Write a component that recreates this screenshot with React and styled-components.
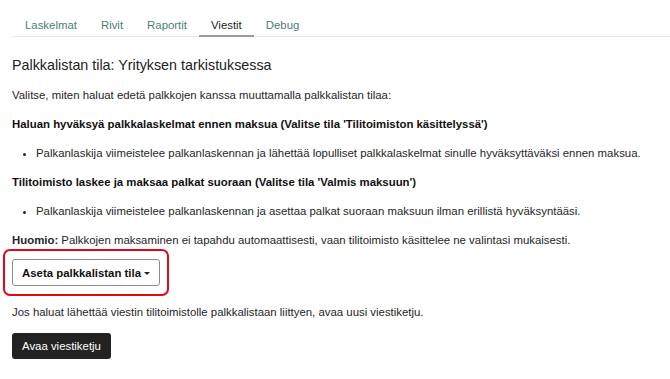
import styled, { createGlobalStyle } from "styled-components";

const GlobalStyle = createGlobalStyle`
  body {
    margin: 0;
    background: #ffffff;
    font-family: "Liberation Sans", Arial, sans-serif;
    color: #262626;
  }
`;

const Page = styled.div`
  padding: 10px 0 0 12px;
  font-size: 11.4px;
`;

const TabBar = styled.nav`
  display: flex;
  padding-left: 1px;
  border-bottom: 1px solid #e8e8e8;
`;

const Tab = styled.div`
  padding: 8px 12px 3px;
  line-height: 14px;
  margin-bottom: -1px;
  color: ${(p) => (p.$active ? "#1f1f1f" : "#4a8077")};
  border-bottom: 2px solid ${(p) => (p.$active ? "#9a9a9a" : "transparent")};
`;

const Content = styled.main`
  display: flex;
  flex-direction: column;
  align-items: flex-start;
  padding-top: 20px;
`;

const Title = styled.h2`
  margin: 0 0 13px;
  font-size: 14.3px;
  font-weight: normal;
  line-height: 17px;
  color: #222;
`;

const Text = styled.p`
  margin: 0 0 ${(p) => p.$gap ?? 13}px;
  line-height: 16px;
  font-weight: ${(p) => (p.$bold ? "bold" : "normal")};
  color: ${(p) => (p.$bold ? "#111" : "#262626")};
`;

const List = styled.ul`
  margin: 0 0 13px;
  padding-left: 24px;
  line-height: 16px;
`;

const Highlight = styled.div`
  margin: 0 0 8px -9px;
  padding: 8px 7px;
  border: 2px solid #e3061b;
  border-radius: 7px;
`;

const DropdownButton = styled.button`
  display: flex;
  align-items: center;
  gap: 3px;
  height: 27px;
  padding: 0 9px;
  background: #fff;
  border: 1px solid #8c8c8c;
  border-radius: 3px;
  font-family: inherit;
  font-size: 11.4px;
  font-weight: bold;
  color: #111;
`;

const Caret = styled.span`
  width: 0;
  height: 0;
  border-left: 3px solid transparent;
  border-right: 3px solid transparent;
  border-top: 3px solid #222;
  margin-top: 1px;
`;

const DarkButton = styled.button`
  height: 26px;
  padding: 0 10px;
  background: #222;
  color: #fff;
  border: none;
  border-radius: 3px;
  font-family: inherit;
  font-size: 11.4px;
`;

const tabs = ["Laskelmat", "Rivit", "Raportit", "Viestit", "Debug"];

export default function App() {
  return (
    <Page>
      <GlobalStyle />
      <TabBar>
        {tabs.map((t) => (
          <Tab key={t} $active={t === "Viestit"}>
            {t}
          </Tab>
        ))}
      </TabBar>
      <Content>
        <Title>Palkkalistan tila: Yrityksen tarkistuksessa</Title>
        <Text>Valitse, miten haluat edetä palkkojen kanssa muuttamalla palkkalistan tilaa:</Text>
        <Text $bold>Haluan hyväksyä palkkalaskelmat ennen maksua (Valitse tila 'Tilitoimiston käsittelyssä')</Text>
        <List>
          <li>Palkanlaskija viimeistelee palkanlaskennan ja lähettää lopulliset palkkalaskelmat sinulle hyväksyttäväksi ennen maksua.</li>
        </List>
        <Text $bold>Tilitoimisto laskee ja maksaa palkat suoraan (Valitse tila 'Valmis maksuun')</Text>
        <List>
          <li>Palkanlaskija viimeistelee palkanlaskennan ja asettaa palkat suoraan maksuun ilman erillistä hyväksyntääsi.</li>
        </List>
        <Text $gap={1}>
          <b>Huomio:</b> Palkkojen maksaminen ei tapahdu automaattisesti, vaan tilitoimisto käsittelee ne valintasi mukaisesti.
        </Text>
        <Highlight>
          <DropdownButton>
            Aseta palkkalistan tila
            <Caret />
          </DropdownButton>
        </Highlight>
        <Text>Jos haluat lähettää viestin tilitoimistolle palkkalistaan liittyen, avaa uusi viestiketju.</Text>
        <DarkButton>Avaa viestiketju</DarkButton>
      </Content>
    </Page>
  );
}
